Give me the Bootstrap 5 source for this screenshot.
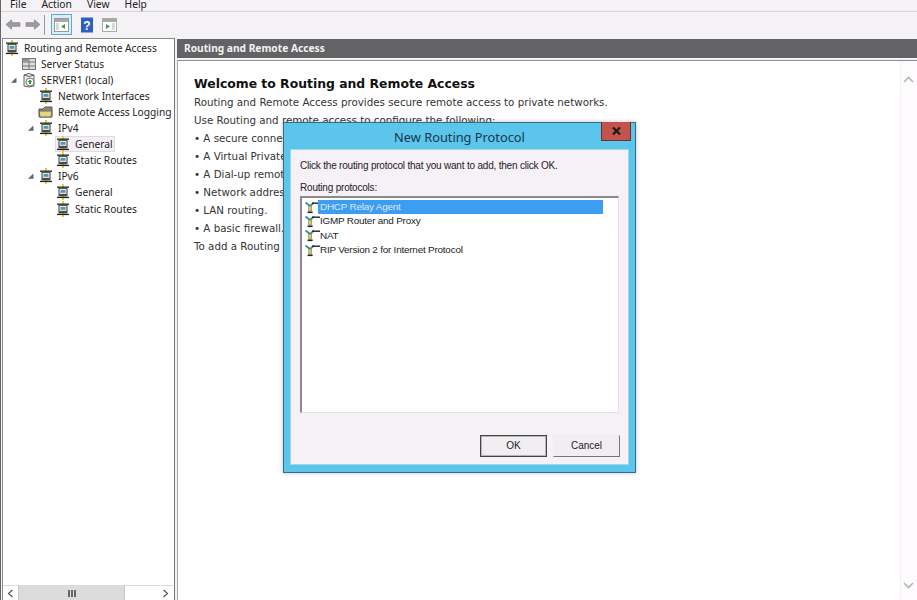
<!DOCTYPE html>
<html lang="en">
<head>
    <meta charset="UTF-8">
    <meta name="viewport" content="width=device-width, initial-scale=1.0">
    <title>Routing and Remote Access</title>
    <link href="https://cdn.jsdelivr.net/npm/bootstrap@5.3.2/dist/css/bootstrap.min.css" rel="stylesheet">
    <style>
        html, body { height: 600px; overflow: hidden; }
        body { background: #f5f2f6; color: #222; font-family: "Noto Sans", sans-serif; font-size: 10.2px; line-height: 16px; }
        .page-wrap { height: 600px; position: relative; border-left: 1px solid #66666a; }

        .menu-strip { height: 12px; border-bottom: 1px solid #d4d2d6; overflow: hidden; padding-left: 9px; gap: 15px; align-items: flex-end; line-height: 14px; font-size: 10.3px; }
        .tool-strip { height: 25px; padding-left: 4px; align-items: center; }
        .tool-sep { width: 1px; height: 20px; background: #9a9a9c; margin: 0 6px 0 3px; }
        .tool-btn { width: 22px; height: 22px; display: flex; align-items: center; justify-content: center; }
        .tool-btn.pressed { width: 21px; height: 21px; background: #d9eef8; border: 1px solid #5fa9cf; }

        .panes { height: 563px; padding-top: 1px; }
        .tree-pane { width: 173px; margin-left: 1px; background: #fff; border: 1px solid #8c8c8e; border-bottom: 0; border-right-color: #77777a; position: relative; padding-top: 1px; white-space: nowrap; }
        .tree-row { height: 16px; display: flex; align-items: center; }
        .tree-row svg { flex: none; margin-right: 4px; }
        .ind0 { padding-left: 1px; }
        .ind1 { padding-left: 18px; }
        .ind2 { padding-left: 35px; }
        .ind3 { padding-left: 52px; }
        .row-last { margin-top: 1px; }
        .expander { width: 10px; flex: none; margin-left: -10px; color: #666; font-size: 7px; line-height: 16px; }
        .row-hot { background: #f3eff4; box-shadow: inset 0 0 0 1px #e0dce2; width: 60px; margin-left: 52px; }

        .h-scroll { position: absolute; left: 0; right: 1px; bottom: 0; height: 15px; border-top: 1px solid #dcdcdc; background: #fff; display: flex; }
        .h-arrow { width: 15px; display: flex; align-items: center; justify-content: center; }
        .h-thumb { width: 107px; background: #dcdcdc; border: 1px solid #c4c4c4; border-top: 0; border-bottom: 0; display: flex; align-items: center; justify-content: center; gap: 1px; }
        .h-thumb span { width: 2px; height: 7px; background: #666; }
        .h-gap { flex: 1; }

        .main-pane { margin-left: 2px; position: relative; }
        .main-title { height: 19px; margin: 1px 0 0 0; background: #636365; color: #f2f2f2; font-weight: 700; font-size: 10.2px; line-height: 18px; padding-left: 7px; }
        .main-body { height: 540px; margin-top: 2px; background: #fff; border-top: 1px solid #8c8c8e; border-left: 1px solid #a8a8aa; padding: 14px 0 0 16px; font-family: "DejaVu Sans", sans-serif; font-size: 10.3px; line-height: 18px; color: #333; position: relative; white-space: nowrap; overflow: hidden; }
        .main-body h1 { font-family: "DejaVu Sans", sans-serif; font-size: 12.4px; font-weight: 700; color: #111; margin: 0; line-height: 18px; }
        .main-body p { margin: 0; }
        .v-track { position: absolute; right: 0; top: 0; bottom: 0; width: 17px; background: #fdfbfe; border-left: 1px solid #f4f2f5; }
        .v-up { position: absolute; right: 3px; top: 15px; }
        .v-down { position: absolute; right: 3px; bottom: 11px; }

        .dlg { position: absolute; left: 282px; top: 122px; width: 353px; height: 351px; background: #5cc5ec; border: 1px solid #2f6e8c; box-shadow: 0 0 4px rgba(0,0,0,.25); }
        .dlg-title { height: 26px; text-align: center; font-size: 12.8px; line-height: 28px; color: #16374a; }
        .dlg-close { position: absolute; right: 4px; top: -1px; width: 30px; height: 19px; background: #c4534e; border: 1px solid #6d3330; border-top: 0; display: flex; align-items: center; justify-content: center; }
        .dlg-inner { margin: 0 6px; height: 316px; background: #f5f1f6; border: 1px solid #a3d5ea; padding: 8px 9px 0 9px; font-family: "Liberation Sans", sans-serif; font-size: 10px; color: #222; letter-spacing: -.2px; position: relative; }
        .dlg-note { line-height: 14px; margin-top: 1px; }
        .dlg-lbl { line-height: 14px; margin-top: 8px; }
        .proto-box { width: 319px; height: 217px; margin-top: 1px; background: #fff; border: 2px solid #8b8b8b; border-right: 1px solid #e4e2e6; border-bottom: 1px solid #e4e2e6; padding: 2px 0 0 2px; font-size: 9.9px; }
        .proto-row { height: 14.3px; display: flex; align-items: center; line-height: 14px; }
        .proto-row svg { flex: none; margin-right: -2px; }
        .proto-row span { padding-left: 2px; }
        .proto-row.picked span { background: #3d9df0; color: #dce9f7; width: 285px; }
        .dlg-btns { position: absolute; right: 8px; bottom: 7px; gap: 6px; }
        .win-btn { width: 67px; height: 22px; padding: 0; border-radius: 0; background: #f1eef2; color: #222; font-family: "Liberation Sans", sans-serif; font-size: 10px; line-height: 20px; border: 1px solid; border-color: #eeeeee #777 #777 #eeeeee; }
        .win-btn.dflt { border-color: #444; box-shadow: inset 0 0 0 1px #b5b5b5; }
    </style>
</head>
<body>

<!-- shared icons -->
<svg width="0" height="0" class="position-absolute">
    <symbol id="i-net" viewBox="0 0 16 16">
        <rect x="7" y="0" width="2" height="16" fill="#e3d23c"/>
        <rect x="2" y="2.5" width="12" height="1.3" fill="#222"/>
        <rect x="2" y="12.8" width="12" height="1.3" fill="#222"/>
        <rect x="4" y="4.3" width="8" height="6" fill="#fff" stroke="#333"/>
        <rect x="5.5" y="5.8" width="5" height="3" fill="#4f9aa8"/>
        <rect x="3.5" y="10.8" width="9" height="1.6" fill="#444"/>
    </symbol>
    <symbol id="i-proto" viewBox="0 0 16 13">
        <path d="M1.5 1.5 L6 5 L10 1.5" fill="none" stroke="#3f8f96" stroke-width="1.8"/>
        <path d="M8 2.2 H16" stroke="#222" stroke-width="1.4"/>
        <rect x="4.8" y="5" width="2.6" height="5" fill="#e3d23c" stroke="#555" stroke-width=".5"/>
        <rect x="3.6" y="10.5" width="5" height="1.6" fill="#222"/>
    </symbol>
</svg>

<div class="page-wrap">
    <div class="menu-strip d-flex">
        <span>File</span><span>Action</span><span>View</span><span>Help</span>
    </div>

    <div class="tool-strip d-flex">
        <svg width="16" height="13" viewBox="0 0 17 14"><path d="M1 7 L7 2 V5 H16 V9 H7 V12 Z" fill="#9c9c9c" stroke="#858585" stroke-width=".8"/></svg>
        <svg class="ms-1" width="16" height="13" viewBox="0 0 17 14"><path d="M16 7 L10 2 V5 H1 V9 H10 V12 Z" fill="#9c9c9c" stroke="#858585" stroke-width=".8"/></svg>
        <span class="tool-sep"></span>
        <span class="tool-btn pressed">
            <svg width="15" height="14" viewBox="0 0 15 14"><rect x=".5" y=".5" width="14" height="13" fill="#fff" stroke="#999"/><rect x="1" y="1" width="13" height="3" fill="#a8a8a8"/><rect x="2" y="5" width="3" height="7" fill="#d8d8d8"/><path d="M11 6 L7 8.5 L11 11 Z" fill="#3aa04a"/></svg>
        </span>
        <span class="tool-btn ms-1">
            <svg width="14" height="16" viewBox="0 0 14 16"><rect width="12" height="15" x="1" y=".5" fill="#2f5fc0"/><text x="7" y="12.5" text-anchor="middle" font-family="Liberation Sans" font-weight="700" font-size="12" fill="#fff">?</text></svg>
        </span>
        <span class="tool-btn">
            <svg width="15" height="14" viewBox="0 0 15 14"><rect x=".5" y=".5" width="14" height="13" fill="#fff" stroke="#aaa"/><rect x="1" y="1" width="13" height="3" fill="#a8a8a8"/><rect x="10" y="5" width="3" height="7" fill="#d8d8d8"/><path d="M4 6 L8 8.5 L4 11 Z" fill="#3aa04a"/></svg>
        </span>
    </div>

    <div class="panes d-flex">
        <div class="tree-pane">
            <div class="tree-row ind0"><svg width="16" height="16"><use href="#i-net"/></svg>Routing and Remote Access</div>
            <div class="tree-row ind1">
                <svg width="16" height="16" viewBox="0 0 16 16"><rect x="1.5" y="2.5" width="13" height="11" fill="#dcdcdc" stroke="#777"/><path d="M1.5 6 H14.5 M1.5 10 H14.5 M8 2.5 V13.5" stroke="#777"/><rect x="2" y="3" width="5.5" height="2.5" fill="#9a8f8f"/></svg>Server Status
            </div>
            <div class="tree-row ind1"><span class="expander">◢</span>
                <svg width="16" height="16" viewBox="0 0 16 16"><path d="M3 3 Q8 0 13 3 V14 Q8 16 3 14 Z" fill="#ececec" stroke="#666"/><path d="M3 3 Q8 6 13 3" fill="none" stroke="#666"/><circle cx="9" cy="10" r="4" fill="#fff" stroke="#777"/><path d="M9 7.5 L11.5 10 H10 V12 H8 V10 H6.5 Z" fill="#2f9a3c"/></svg>SERVER1 (local)
            </div>
            <div class="tree-row ind2"><svg width="16" height="16"><use href="#i-net"/></svg>Network Interfaces</div>
            <div class="tree-row ind2">
                <svg width="16" height="16" viewBox="0 0 16 16"><path d="M1 5 H5 L7 3 H14 V13 H1 Z" fill="#8a8a70" stroke="#555"/><path d="M1 7 H14 L13 13 H2 Z" fill="#e6d77e" stroke="#666"/></svg>Remote Access Logging
            </div>
            <div class="tree-row ind2"><span class="expander">◢</span><svg width="16" height="16"><use href="#i-net"/></svg>IPv4</div>
            <div class="tree-row row-hot"><svg width="16" height="16"><use href="#i-net"/></svg>General</div>
            <div class="tree-row ind3"><svg width="16" height="16"><use href="#i-net"/></svg>Static Routes</div>
            <div class="tree-row ind2"><span class="expander">◢</span><svg width="16" height="16"><use href="#i-net"/></svg>IPv6</div>
            <div class="tree-row ind3"><svg width="16" height="16"><use href="#i-net"/></svg>General</div>
            <div class="tree-row ind3 row-last"><svg width="16" height="16"><use href="#i-net"/></svg>Static Routes</div>

            <div class="h-scroll">
                <span class="h-arrow"><svg width="7" height="9" viewBox="0 0 7 9"><path d="M5.5 1 L1.5 4.5 L5.5 8" fill="none" stroke="#555" stroke-width="1.2"/></svg></span>
                <span class="h-thumb"><span></span><span></span><span></span></span>
                <span class="h-gap"></span>
                <span class="h-arrow"><svg width="7" height="9" viewBox="0 0 7 9"><path d="M1.5 1 L5.5 4.5 L1.5 8" fill="none" stroke="#555" stroke-width="1.2"/></svg></span>
            </div>
        </div>

        <div class="main-pane flex-grow-1">
            <div class="main-title">Routing and Remote Access</div>
            <div class="main-body">
                <h1>Welcome to Routing and Remote Access</h1>
                <p>Routing and Remote Access provides secure remote access to private networks.</p>
                <p>Use Routing and remote access to configure the following:</p>
                <p>• A secure connection between two private networks.</p>
                <p>• A Virtual Private Network (VPN) gateway.</p>
                <p>• A Dial-up remote access server.</p>
                <p>• Network address translation (NAT).</p>
                <p>• LAN routing.</p>
                <p>• A basic firewall.</p>
                <p>To add a Routing and Remote Access feature, click Action.</p>
                <div class="v-track"></div>
                <svg class="v-up" width="11" height="7" viewBox="0 0 11 7"><path d="M1 6 L5.5 1.5 L10 6" fill="none" stroke="#b5b5b5" stroke-width="1.6"/></svg>
                <svg class="v-down" width="11" height="7" viewBox="0 0 11 7"><path d="M1 1 L5.5 5.5 L10 1" fill="none" stroke="#b5b5b5" stroke-width="1.6"/></svg>
            </div>
        </div>
    </div>

    <!-- New Routing Protocol dialog -->
    <div class="dlg">
        <div class="dlg-title">New Routing Protocol</div>
        <div class="dlg-close">
            <svg width="9" height="8" viewBox="0 0 9 8"><path d="M1 .5 L8 7.5 M8 .5 L1 7.5" stroke="#1c1c1c" stroke-width="2.2"/></svg>
        </div>
        <div class="dlg-inner">
            <div class="dlg-note">Click the routing protocol that you want to add, then click OK.</div>
            <div class="dlg-lbl">Routing protocols:</div>
            <div class="proto-box">
                <div class="proto-row picked"><svg width="16" height="13"><use href="#i-proto"/></svg><span>DHCP Relay Agent</span></div>
                <div class="proto-row"><svg width="16" height="13"><use href="#i-proto"/></svg><span>IGMP Router and Proxy</span></div>
                <div class="proto-row"><svg width="16" height="13"><use href="#i-proto"/></svg><span>NAT</span></div>
                <div class="proto-row"><svg width="16" height="13"><use href="#i-proto"/></svg><span>RIP Version 2 for Internet Protocol</span></div>
            </div>
            <div class="dlg-btns d-flex">
                <button type="button" class="btn win-btn dflt">OK</button>
                <button type="button" class="btn win-btn">Cancel</button>
            </div>
        </div>
    </div>
</div>

<script src="https://cdn.jsdelivr.net/npm/bootstrap@5.3.2/dist/js/bootstrap.bundle.min.js"></script>
</body>
</html>
